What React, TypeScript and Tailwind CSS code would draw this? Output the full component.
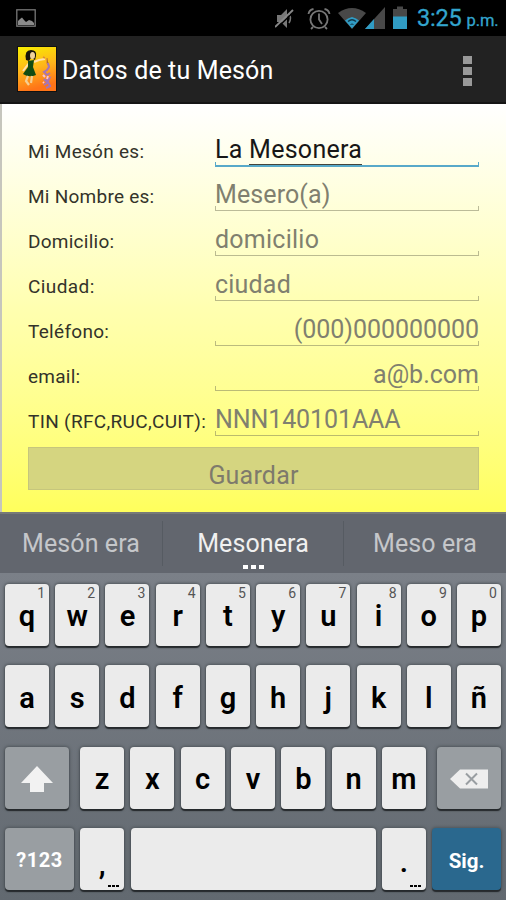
import React from "react";
import clsx from "clsx";

interface IField {
  label: string;
  labelClass: string;
  hint: string;
  hintClass: string;
  right?: boolean;
}

const fields: IField[] = [
  { label: "Mi Nombre es:", labelClass: "tracking-[0.25px]", hint: "Mesero(a)", hintClass: "tracking-[0.1px]" },
  { label: "Domicilio:", labelClass: "tracking-[0.25px]", hint: "domicilio", hintClass: "tracking-[0.25px]" },
  { label: "Ciudad:", labelClass: "tracking-[0.4px]", hint: "ciudad", hintClass: "tracking-[0.2px]" },
  { label: "Teléfono:", labelClass: "tracking-[0.3px]", hint: "(000)000000000", hintClass: "tracking-[-0.05px]", right: true },
  { label: "email:", labelClass: "tracking-[0.25px]", hint: "a@b.com", hintClass: "tracking-[0px]", right: true },
  { label: "TIN (RFC,RUC,CUIT):", labelClass: "tracking-[0.33px]", hint: "NNN140101AAA", hintClass: "tracking-[-0.1px]" },
];

const topKeys = ["q", "w", "e", "r", "t", "y", "u", "i", "o", "p"];
const homeKeys = ["a", "s", "d", "f", "g", "h", "j", "k", "l", "ñ"];
const bottomKeys = ["z", "x", "c", "v", "b", "n", "m"];

const StatusBar = () => (
  <div className="flex h-9 items-center bg-black">
    <svg className="ml-4 h-[18px] w-5" viewBox="0 0 20 18">
      <rect x="0.8" y="0.8" width="18.4" height="16.4" fill="#000" stroke="#777" strokeWidth="1.3" />
      <path d="M2 16V12L4 10L6 8.5L8 11L10 13L13 11L16 12L18 14V16Z" fill="#8a8a8a" />
    </svg>
    <div className="flex-1" />
    <svg className="h-9 w-[140px]" viewBox="0 0 140 36">
      {/* muted speaker */}
      <path d="M2 15H6L12 9V28L6 22H2Z" fill="#777" />
      <path d="M14 14Q17 18 14 23" fill="none" stroke="#777" strokeWidth="1.5" />
      <path d="M2 28L19 11.500" stroke="#000" strokeWidth="1.6" />
      <path d="M0 27L18 10" stroke="#888" strokeWidth="1.8" />
      {/* alarm */}
      <g fill="none" stroke="#777" strokeWidth="1.8">
        <circle cx="44" cy="19.5" r="8.6" />
        <path d="M44 13.500V19.500L47 24M33.500 14Q34 10 38.500 9M54.500 14Q54 10 49.500 9M38 27L36 29M50 27L52 29" />
      </g>
      {/* wifi */}
      <path d="M63 13Q77 3 91 13L77 29Z" fill="#484848" />
      <path d="M70 20.500L73 18.500L77 17L81 18.500L84 20.500L77 28.500Z" fill="#309cc4" />
      <path d="M73 21.500Q77 18 81 21.500" fill="none" stroke="#123849" strokeWidth="1.4" />
      <path d="M75.500 24.500Q77 23.500 78.500 24.500" fill="none" stroke="#123849" strokeWidth="1" />
      {/* signal */}
      <path d="M110 7V29H90Z" fill="#484848" />
      <path d="M99 19V29H90Z" fill="#309cc4" />
      {/* battery */}
      <path d="M118 9H122V6.500H128V9H132V29H118Z" fill="#484848" />
      <path d="M118 16.500H132V29H118Z" fill="#309cc4" />
    </svg>
    <div className="ml-[2px] flex w-[89px] items-baseline pt-0.5 whitespace-nowrap text-[#33a5ce] [-webkit-text-stroke:0.3px]">
      <span className="text-[23.5px] tracking-[-0.2px]">3:25</span>
      <span className="ml-[5px] text-[16.5px] tracking-[-0.1px]">p.m.</span>
    </div>
  </div>
);

const AppIcon = () => (
  <svg className="h-[46px] w-10" viewBox="0 0 40 46">
    <defs>
      <linearGradient id="sunset" x1="0" y1="0" x2="0.25" y2="1">
        <stop offset="0" stopColor="#f8f000" />
        <stop offset="0.55" stopColor="#ffb51b" />
        <stop offset="1" stopColor="#ff7418" />
      </linearGradient>
    </defs>
    <rect width="40" height="46" fill="#111" />
    <rect x="1" y="1" width="38" height="44" fill="url(#sunset)" />
    <path d="M9 14Q7 4 14 4Q20 4 19 10L18 14L14 12L12 15Z" fill="#18150a" />
    <ellipse cx="15.500" cy="9.500" rx="2.500" ry="3.500" fill="#f1d29a" />
    <path d="M12 17L6 25M17 16L22 14L28 13" fill="none" stroke="#ffe0ae" strokeWidth="2" />
    <path d="M11 15L17 14L16 21L19 29Q12 32 6 28L11 21Z" fill="#124b12" />
    <path d="M11 30L9 35L12 39M15 30L14 37" fill="none" stroke="#f5cf93" strokeWidth="2.200" />
    <path d="M26 11L28 12M30 12V17L32 20" stroke="#dd8c33" strokeWidth="1.500" />
    <path d="M31 17L32 21L30 24L27 26L30 29L33 27M27 33L29 35L32 33L30 37L27 39M31 36L33 40L29 42" fill="none" stroke="#a574b8" strokeWidth="2" />
    <path d="M26 29L28 31M31 30L30 33M26 36L27 37" stroke="#f5c0da" strokeWidth="2" />
  </svg>
);

const ActionBar = () => (
  <div className="flex h-[68px] items-center border-b-2 border-[#151515] bg-[#222]">
    <div className="ml-[17px] flex items-center">
      <AppIcon />
      <span className="ml-[5px] pt-1 text-[25px] tracking-[0.14px] text-white">Datos de tu Mesón</span>
    </div>
    <div className="mt-[3px] mr-[34px] ml-auto flex flex-col gap-[3px]">
      <div className="h-2 w-[9px] bg-[#999]" />
      <div className="h-2 w-[9px] bg-[#999]" />
      <div className="h-2 w-[9px] bg-[#999]" />
    </div>
  </div>
);

const Row: React.FC<{ label: string; labelClass: string; focused?: boolean; right?: boolean; children: React.ReactNode }> = (props) => {
  const { label, labelClass, focused, right, children } = props;
  return (
    <div className="flex h-[45px]">
      <div className={clsx("w-[187px] pt-[19px] text-[19px] leading-6 whitespace-nowrap text-[#33332a]", labelClass)}>
        {label}
      </div>
      <div className={clsx("relative w-[264px] pt-[14px] text-[25px] leading-[30px] whitespace-nowrap", right && "text-right")}>
        {children}
        <span
          className={clsx(
            "absolute inset-x-0 h-[5px] border-x",
            focused ? "bottom-[-1px] border-b-2 border-[#58a9c9]" : "bottom-0 border-b border-[#77775a]/50"
          )}
        />
      </div>
    </div>
  );
};

const Form = () => (
  <div className="h-[408px] border-l-2 border-[#c6c6bd] bg-linear-to-b from-white via-[#ffffb0] to-[#ffff5c] pt-[17px] pl-[26px]">
    <Row label="Mi Mesón es:" labelClass="tracking-[0.28px]" focused>
      <span className="tracking-[0.27px] text-[#171717]">
        La <span className="border-b border-[#44443a] leading-none">Mesonera</span>
      </span>
    </Row>
    {fields.map((f) => (
      <Row key={f.label} label={f.label} labelClass={f.labelClass} right={f.right}>
        <span className={clsx("text-[#80806f]", f.hintClass)}>{f.hint}</span>
      </Row>
    ))}
    <button className="mt-[11px] block h-[43px] w-[451px] border border-[#c6c67c] bg-[#d5d580] pt-[13px] text-[25px] leading-[30px] tracking-[0.2px] text-[#7e7a6c]">
      Guardar
    </button>
  </div>
);

const Suggestions = () => (
  <div className="flex h-[61px] items-center border-t-2 border-[#777a78] bg-[#62666e] text-[25px] text-[#c5c7ca]">
    <div className="w-[162px] text-center tracking-[0.1px]">Mesón era</div>
    <div className="relative flex h-[45px] w-[182px] items-center justify-center border-x border-[#565b62] tracking-[0.1px] text-[#f0f0f0]">
      Mesonera
      <div className="absolute bottom-[-3px] flex gap-[3px]">
        <i className="h-1 w-[5px] bg-white" />
        <i className="h-1 w-[5px] bg-white" />
        <i className="h-1 w-[5px] bg-white" />
      </div>
    </div>
    <div className="flex-1 text-center tracking-[0.1px]">Meso era</div>
  </div>
);

const Key: React.FC<{ className?: string; hint?: string; children?: React.ReactNode }> = ({ className, hint, children }) => (
  <div
    className={clsx(
      "relative flex h-[62px] items-center justify-center rounded-[4px] shadow-[0_2px_1px_#25292c,0_0_3px_1px_#50565b]",
      className || "w-[44px] bg-[#ebebeb] pt-[5px] text-[29px] font-semibold text-black"
    )}
  >
    {children}
    {hint && <span className="absolute top-px right-[4px] text-[14px] leading-4 font-normal text-[#555]">{hint}</span>}
  </div>
);

const Dots = () => (
  <div className="absolute right-[5px] bottom-[3px] flex gap-px">
    <i className="h-[2px] w-[3px] bg-black" />
    <i className="h-[2px] w-[3px] bg-black" />
    <i className="h-[2px] w-[3px] bg-black" />
  </div>
);

const Keyboard = () => (
  <div className="flex h-[327px] flex-col gap-[19.500px] bg-linear-to-b from-[#7b8088] to-[#626970] px-[5px] pt-[10.500px]">
    <div className="flex justify-between">
      {topKeys.map((k, i) => (
        <Key key={k} hint={String((i + 1) % 10)}>{k}</Key>
      ))}
    </div>
    <div className="flex justify-between">
      {homeKeys.map((k) => (
        <Key key={k}>{k}</Key>
      ))}
    </div>
    <div className="flex justify-between">
      <Key className="w-16 bg-[#999ea2]">
        <svg className="mt-0.5 h-7 w-[34px]" viewBox="0 0 34 28">
          <path d="M17 1L33 18H24V27H10V18H1Z" fill="#f2f2f2" />
        </svg>
      </Key>
      <div className="flex w-[346px] justify-between">
        {bottomKeys.map((k) => (
          <Key key={k}>{k}</Key>
        ))}
      </div>
      <Key className="w-16 bg-[#999ea2]">
        <svg className="mt-[3px] h-5 w-[38px]" viewBox="0 0 38 20">
          <path d="M0 10L10 0.500H38V19.500H10Z" fill="#eee" />
          <path d="M16 4.500L27 15.500M27 4.500L16 15.500" stroke="#999ea2" strokeWidth="2" />
        </svg>
      </Key>
    </div>
    <div className="flex justify-between">
      <Key className="w-[69px] bg-[#999ea2] pt-0.5 text-[20px] font-bold tracking-[0.5px] text-white">?123</Key>
      <Key>
        <span className="pt-1.5">,</span>
        <Dots />
      </Key>
      <Key className="w-[245px] bg-[#ebebeb]" />
      <Key>
        <span className="pt-0.5">.</span>
        <Dots />
      </Key>
      <Key className="w-[69px] bg-[#2a688e] pt-1 text-[20.5px] font-bold text-white">Sig.</Key>
    </div>
  </div>
);

const App = () => (
  <div className="h-[900px] w-[506px] overflow-hidden bg-black font-[Roboto,sans-serif]">
    <StatusBar />
    <ActionBar />
    <Form />
    <Suggestions />
    <Keyboard />
  </div>
);

export default App;
